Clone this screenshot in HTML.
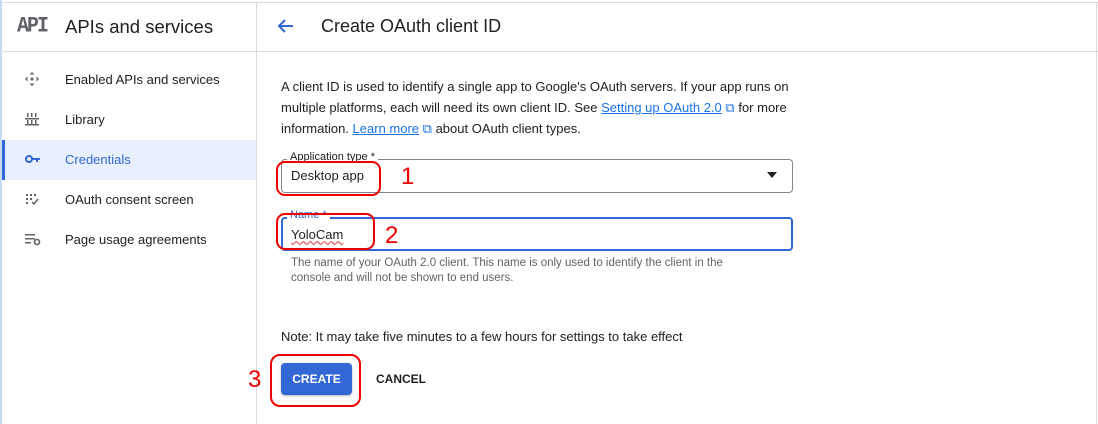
<!DOCTYPE html>
<html><head><meta charset="utf-8"><style>
*{box-sizing:border-box;margin:0;padding:0}
body{width:1098px;height:424px;overflow:hidden;background:#fff;font-family:"Liberation Sans",Arial,sans-serif;color:#202124;position:relative}
.abs{position:absolute}
.t{position:absolute;white-space:nowrap}
</style></head><body>
<div class="abs" style="left:0;top:2px;width:1098px;height:1px;background:#dadce0"></div>
<div class="abs" style="left:0;top:0;width:2px;height:424px;background:#c6dbf0"></div>
<div class="abs" style="left:256px;top:2px;width:1px;height:422px;background:#dadce0"></div>
<div class="abs" style="left:1096px;top:2px;width:1px;height:422px;background:#dadce0"></div>
<div class="abs" style="left:0;top:51px;width:1098px;height:1px;background:#dadce0"></div>

<div class="t" style="left:17px;top:15px;font-family:'Liberation Mono',monospace;font-weight:bold;font-size:20px;color:#5f6368;letter-spacing:-2px;transform:scaleY(1.1)">API</div>
<div class="t" style="left:65px;top:16px;font-size:18.5px">APIs and services</div>

<div class="abs" style="left:2px;top:140px;width:254px;height:40px;background:#e8f0fe"></div>
<div class="abs" style="left:2px;top:140px;width:3px;height:40px;background:#3367d6"></div>

<svg class="abs" style="left:24px;top:71px" width="16" height="16" viewBox="0 0 16 16" fill="#5f6368"><path d="M8 1l2.5 2.5H5.5zM8 15l2.5-2.5h-5zM1 8l2.5-2.5v5zM15 8l-2.5-2.5v5z"/><circle cx="8" cy="8" r="1.5"/></svg>
<div class="t" style="left:65px;top:72px;font-size:13px">Enabled APIs and services</div>
<svg class="abs" style="left:25px;top:112px" width="14" height="14" viewBox="0 0 14 14" fill="#5f6368"><rect x="2" y="1" width="1.5" height="4"/><rect x="6" y="1" width="1.5" height="4"/><rect x="10" y="1" width="1.5" height="4"/><rect x="0" y="6" width="14" height="1.5"/><rect x="2" y="8" width="1.5" height="5"/><rect x="6" y="8" width="1.5" height="5"/><rect x="10" y="8" width="1.5" height="5"/><rect x="0" y="12" width="14" height="1.5"/></svg>
<div class="t" style="left:65px;top:112px;font-size:13px">Library</div>
<svg class="abs" style="left:25px;top:154px" width="16" height="10" viewBox="0 0 16 10"><circle cx="4" cy="5" r="3" fill="none" stroke="#3367d6" stroke-width="2"/><path d="M7 4h8v2h-2v2h-2V6H7z" fill="#3367d6"/></svg>
<div class="t" style="left:65px;top:152px;font-size:13px;color:#3367d6">Credentials</div>
<svg class="abs" style="left:25px;top:193px" width="14" height="12" viewBox="0 0 14 12" fill="#5f6368"><rect x="1" y="1" width="2" height="2"/><rect x="5" y="1" width="2" height="2"/><rect x="9" y="1" width="2" height="2"/><rect x="1" y="5" width="2" height="2"/><rect x="5" y="5" width="2" height="2"/><rect x="1" y="9" width="2" height="2"/><path d="M7 9l2 2 4-5" stroke="#5f6368" stroke-width="1.5" fill="none"/></svg>
<div class="t" style="left:65px;top:192px;font-size:13px">OAuth consent screen</div>
<svg class="abs" style="left:24px;top:233px" width="18" height="13" viewBox="0 0 18 13" fill="#5f6368"><rect x="1" y="1" width="10" height="1.5"/><rect x="1" y="5" width="10" height="1.5"/><rect x="1" y="9" width="6" height="1.5"/><circle cx="13" cy="9" r="2.5" fill="none" stroke="#5f6368" stroke-width="1.6"/></svg>
<div class="t" style="left:65px;top:232px;font-size:13px">Page usage agreements</div>

<svg class="abs" style="left:276px;top:18px" width="18" height="16" viewBox="0 0 18 16"><path d="M17 8H3M9 2L3 8l6 6" stroke="#3367d6" stroke-width="2" fill="none"/></svg>
<div class="t" style="left:321px;top:16px;font-size:18px">Create OAuth client ID</div>

<div class="abs" style="left:281px;top:76px;width:520px;font-size:13px;line-height:21px;color:#202124">A client ID is used to identify a single app to Google's OAuth servers. If your app runs on<br>multiple platforms, each will need its own client ID. See <span style="color:#1a73e8;text-decoration:underline">Setting up OAuth 2.0</span> <span style="color:#1a73e8">⧉</span> for more<br>information. <span style="color:#1a73e8;text-decoration:underline">Learn more</span> <span style="color:#1a73e8">⧉</span> about OAuth client types.</div>

<div class="abs" style="left:281px;top:159px;width:512px;height:34px;border:1px solid #80868b;border-radius:4px"></div>
<div class="t" style="left:287px;top:151px;font-size:11px;background:#fff;padding:0 3px;color:#202124">Application type *</div>
<div class="t" style="left:291px;top:168px;font-size:13px">Desktop app</div>
<svg class="abs" style="left:767px;top:172px" width="10" height="6"><path d="M0 0h10L5 6z" fill="#202124"/></svg>

<div class="abs" style="left:281px;top:217px;width:512px;height:34px;border:2px solid #3367d6;border-radius:4px"></div>
<div class="t" style="left:287px;top:209px;font-size:11px;background:#fff;padding:0 3px;color:#3367d6">Name *</div>
<div class="t" style="left:291px;top:227px;font-size:13px;text-decoration:underline wavy #e06666">YoloCam</div>
<div class="abs" style="left:291px;top:256px;width:470px;font-size:11.5px;line-height:15px;color:#5f6368">The name of your OAuth 2.0 client. This name is only used to identify the client in the<br>console and will not be shown to end users.</div>

<div class="t" style="left:281px;top:329px;font-size:13px">Note: It may take five minutes to a few hours for settings to take effect</div>

<div class="abs" style="left:281px;top:363px;width:71px;height:32px;background:#3367d6;border-radius:4px;box-shadow:0 1px 2px rgba(0,0,0,.3);color:#fff;font-weight:bold;font-size:12px;text-align:center;line-height:32px">CREATE</div>
<div class="t" style="left:376px;top:372px;font-size:12px;font-weight:bold;color:#202124">CANCEL</div>

<div class="abs" style="left:276px;top:161px;width:105px;height:35px;border:2px solid #e00;border-radius:9px"></div>
<div class="t" style="left:401px;top:163px;font-size:24px;color:#e00">1</div>
<div class="abs" style="left:276px;top:213px;width:99px;height:37px;border:2px solid #e00;border-radius:9px"></div>
<div class="t" style="left:385px;top:222px;font-size:24px;color:#e00">2</div>
<div class="abs" style="left:270px;top:354px;width:91px;height:53px;border:2px solid #e00;border-radius:10px"></div>
<div class="t" style="left:248px;top:366px;font-size:24px;color:#e00">3</div>
</body></html>
